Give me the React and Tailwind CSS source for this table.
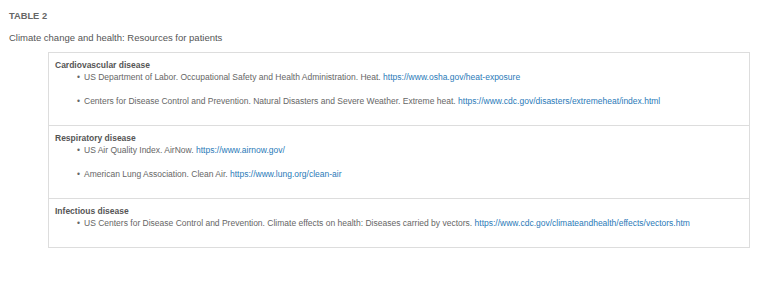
const sections = [
  {
    title: 'Cardiovascular disease',
    items: [
      {
        text: 'US Department of Labor. Occupational Safety and Health Administration. Heat.',
        url: 'https://www.osha.gov/heat-exposure',
      },
      {
        text: 'Centers for Disease Control and Prevention. Natural Disasters and Severe Weather. Extreme heat.',
        url: 'https://www.cdc.gov/disasters/extremeheat/index.html',
      },
    ],
  },
  {
    title: 'Respiratory disease',
    items: [
      { text: 'US Air Quality Index. AirNow.', url: 'https://www.airnow.gov/' },
      { text: 'American Lung Association. Clean Air.', url: 'https://www.lung.org/clean-air' },
    ],
  },
  {
    title: 'Infectious disease',
    items: [
      {
        text: 'US Centers for Disease Control and Prevention. Climate effects on health: Diseases carried by vectors.',
        url: 'https://www.cdc.gov/climateandhealth/effects/vectors.htm',
      },
    ],
  },
];

export default function App() {
  return (
    <div className="w-[780px] h-[288px] bg-white font-['Liberation_Sans',Arial,sans-serif] text-[#555]">
      <div className="pt-[11px] pl-[9px] text-[9.3px] leading-[11px] font-bold text-[#666]">TABLE 2</div>
      <div className="mt-[10px] pl-[9px] text-[9.5px] leading-[12px] text-[#555]">
        Climate change and health: Resources for patients
      </div>

      <div className="ml-[48px] mt-[8px] w-[702px] border border-[#ddd]">
        {sections.map((s, i) => (
          <div key={s.title} className={`px-[6px] pt-[6px] pb-[6px] ${i > 0 ? 'border-t border-[#ddd]' : ''}`}>
            <div className="text-[8.5px] leading-[12px] font-bold text-[#555]">{s.title}</div>
            <ul className="pl-[22px]">
              {s.items.map((it) => (
                <li key={it.url} className="flex mb-3 text-[8.5px] leading-[12px] text-[#666]">
                  <span className="w-[7px] shrink-0">•</span>
                  <span>
                    {it.text} <a className="text-[#2a7ab8]">{it.url}</a>
                  </span>
                </li>
              ))}
            </ul>
          </div>
        ))}
      </div>
    </div>
  );
}
